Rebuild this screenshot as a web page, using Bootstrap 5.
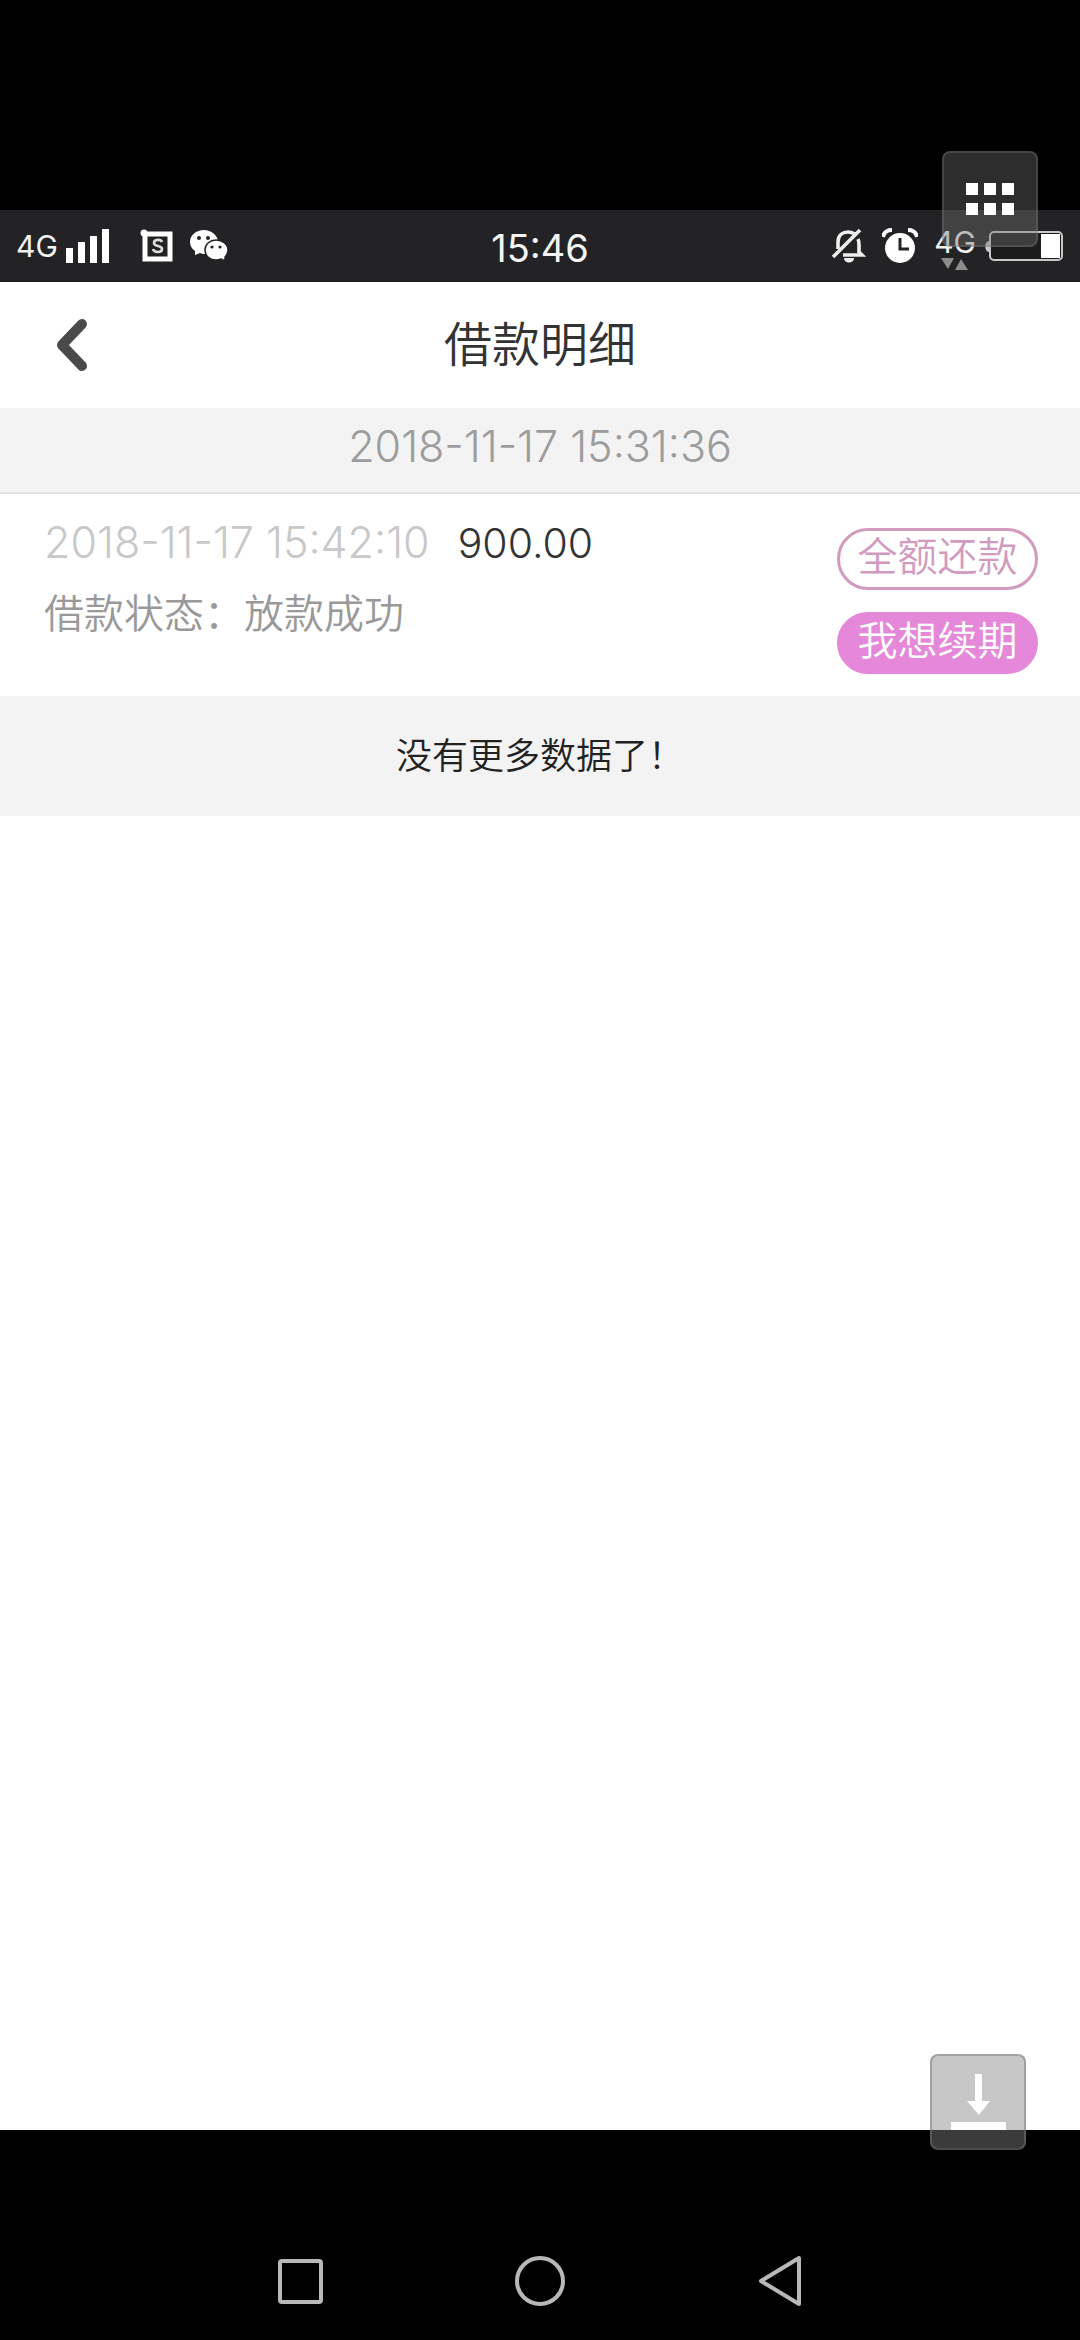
<!DOCTYPE html>
<html lang="zh-CN">
<head>
<meta charset="utf-8">
<meta name="viewport" content="width=device-width, initial-scale=1">
<title>借款明细</title>
<link href="https://cdn.jsdelivr.net/npm/bootstrap@5.3.0/dist/css/bootstrap.min.css" rel="stylesheet">
<style>
  body { background: #000; font-family: Inter, "Noto Sans CJK SC", sans-serif; font-weight: 350; color: #333; }
  svg { display: block; flex: none; }
  .top-gap { height: 210px; }
  .status-strip { height: 72px; padding: 0 16px; background: #232325; color: #f4f4f4; font-weight: 400; }
  .status-side { flex: 1 1 0; }
  .net-label { font-size: 30px; line-height: 32px; }
  .clock { font-size: 38px; line-height: 48px; padding-top: 4px; }
  .title-bar { height: 126px; padding: 0 48px; }
  .title-side { width: 48px; }
  .page-title { font-size: 48px; line-height: 64px; font-weight: 350; }
  .date-bar { height: 86px; background: #f3f3f3; border-bottom: 2px solid #e2e2e2; font-size: 43px; font-weight: 300; line-height: 76px; color: #9c9c9c; }
  .loan-row { padding: 12px 42px 22px 44px; }
  .loan-text { font-size: 40px; line-height: 72px; color: #999; }
  .loan-line { height: 72px; font-size: 43px; font-weight: 300; }
  .loan-time { color: #c8c8c8; }
  .loan-sum { color: #333; margin-left: 28px; font-size: 41px; font-weight: 350; }
  .loan-actions { padding-top: 22px; gap: 22px; }
  .pill-btn { width: 201px; height: 62px; padding: 0 0 4px; border: 3px solid #d39abf; border-radius: 31px; font-size: 40px; line-height: 48px; font-weight: 350; color: #d39abf; }
  .pill-btn.filled, .pill-btn.filled:hover { background: #e588d9; border-color: #e588d9; color: #fff; }
  .end-note { height: 120px; background: #f3f3f3; color: #222; font-size: 36px; line-height: 48px; }
  .nav-keys { height: 210px; padding-top: 124px; }
  .nav-keys .inner { width: 100%; max-width: 720px; }
  .float-btn { width: 96px; height: 96px; padding: 0; border-radius: 8px; border: 2px solid rgba(130,130,130,.3); background: rgba(112,112,112,.4); }
  .float-menu { top: 151px; right: 42px; }
  .float-save { bottom: -20px; right: 54px; background: linear-gradient(rgba(90,90,90,.34) 74px, rgba(140,140,140,.42) 74px); border-color: rgba(120,120,120,.5); overflow: hidden; }
</style>
<script src="https://cdn.jsdelivr.net/npm/bootstrap@5.3.0/dist/js/bootstrap.bundle.min.js"></script>
</head>
<body>
<div class="d-flex flex-column min-vh-100 position-relative">
  <div class="top-gap"></div>
  <div class="status-strip d-flex align-items-center">
    <div class="status-side d-flex align-items-center">
      <span class="net-label">4G</span>
      <svg class="ms-2" width="44" height="34" viewBox="0 0 44 34" fill="#fff"><path d="M0 19h7v15H0zM12 13h7v21h-7zM24 7h7v27h-7zM36 0h7v34h-7z"/></svg>
      <svg class="ms-4" width="40" height="34" viewBox="-7 0 40 34"><path d="M4 5h25v25H4z" fill="none" stroke="#fff" stroke-width="5"/><circle cx="3" cy="4" r="3.5" fill="#fff"/><path d="M21 13c-1-3-8-3-8 1 0 4 8 2 8 6 0 4-8 4-9 0" fill="none" stroke="#ddd" stroke-width="2.6"/></svg>
      <svg class="ms-3" width="38" height="32" viewBox="0 0 38 32"><path d="M14 0C6 0 0 5 0 12c0 4 2 7 5 9v4l5-2c2 1 4 1 6 1 7 0 12-5 12-12S21 0 14 0z" fill="#fff"/><circle cx="9" cy="8" r="2" fill="#232325"/><circle cx="18" cy="8" r="2" fill="#232325"/><path d="M26 10c-6 0-11 4-11 10s5 10 11 10c2 0 3 0 5-1l4 2v-4c2-2 3-4 3-7 0-6-6-10-12-10z" fill="#fff" stroke="#232325" stroke-width="1.5"/><circle cx="22" cy="17" r="1.6" fill="#232325"/><circle cx="30" cy="17" r="1.6" fill="#232325"/></svg>
    </div>
    <div class="clock">15:46</div>
    <div class="status-side d-flex align-items-center justify-content-end">
      <svg width="34" height="36" viewBox="0 0 34 36" fill="none" stroke="#eee" stroke-width="3.6"><path d="M6 21V14C6 7 11 4 16 4c3 0 5 1 7 2M26 11c1 2 1 4 1 6v7l3 3H11M1 29L28 2"/><path d="M12 30h10c0 6-10 6-10 0z" fill="#eee" stroke="none"/></svg>
      <svg class="ms-3" width="36" height="36" viewBox="0 0 36 36"><circle cx="18" cy="20" r="15" fill="#fff"/><path d="M1 9C2 4 5 2 10 2M26 2c5 0 8 2 9 7" fill="none" stroke="#fff" stroke-width="4"/><path d="M18 10v11h9" fill="none" stroke="#232325" stroke-width="3"/></svg>
      <div class="d-flex flex-column align-items-center ms-3 pt-1">
        <span class="net-label">4G</span>
        <svg width="28" height="12" viewBox="0 0 28 12" fill="#8c8c8c"><path d="M0 0h13L7 11zM14 12h13L20 1z"/></svg>
      </div>
      <svg class="ms-2" width="80" height="32" viewBox="0 0 80 32"><path d="M5 11v11c-5 0-5-11 0-11z" fill="#ccc"/><rect x="6" y="2" width="72" height="28" rx="4" fill="#1c1c1c" stroke="#c8c8c8" stroke-width="2"/><path d="M57 4h19v24H57z" fill="#fff"/></svg>
    </div>
  </div>

  <main class="flex-grow-1 bg-white position-relative">
    <header class="title-bar d-flex align-items-center justify-content-between">
      <button class="btn p-0 border-0 title-side" type="button" aria-label="返回">
        <svg width="48" height="54" viewBox="0 0 48 54"><path d="M34 6L14 27l20 21" fill="none" stroke="#4a4a4a" stroke-width="10" stroke-linecap="round" stroke-linejoin="round"/></svg>
      </button>
      <h1 class="page-title m-0">借款明细</h1>
      <span class="title-side"></span>
    </header>
    <div class="date-bar text-center">2018-11-17 15:31:36</div>
    <section class="loan-row d-flex justify-content-between">
      <div class="loan-text">
        <div class="loan-line"><span class="loan-time">2018-11-17 15:42:10</span><span class="loan-sum">900.00</span></div>
        <div>借款状态：放款成功</div>
      </div>
      <div class="loan-actions d-flex flex-column">
        <button class="btn pill-btn" type="button">全额还款</button>
        <button class="btn pill-btn filled" type="button">我想续期</button>
      </div>
    </section>
    <div class="end-note d-flex align-items-center justify-content-center">没有更多数据了！</div>
    <button class="btn float-btn float-save position-absolute" type="button" aria-label="下载">
      <svg width="92" height="92" viewBox="0 0 92 92" fill="#fff"><path d="M43 18h7v27h8L47 59 35 45h8zM19 66h55v8H19z"/></svg>
    </button>
  </main>

  <nav class="nav-keys d-flex justify-content-center">
    <div class="inner d-flex align-items-start">
      <button class="btn p-0 border-0 w-100 d-flex justify-content-center" type="button" aria-label="最近任务"><svg width="50" height="54" viewBox="0 0 50 54"><rect x="5" y="7" width="41" height="41" rx="2" fill="none" stroke="#b8b8b8" stroke-width="4"/></svg></button>
      <button class="btn p-0 border-0 w-100 d-flex justify-content-center" type="button" aria-label="主页"><svg width="50" height="54" viewBox="0 0 50 54"><circle cx="25" cy="27" r="23" fill="none" stroke="#b8b8b8" stroke-width="4"/></svg></button>
      <button class="btn p-0 border-0 w-100 d-flex justify-content-center" type="button" aria-label="返回"><svg width="50" height="54" viewBox="0 0 50 54"><path d="M44 4v46L6 27z" fill="none" stroke="#b8b8b8" stroke-width="4" stroke-linejoin="round"/></svg></button>
    </div>
  </nav>

  <button class="btn float-btn float-menu position-absolute" type="button" aria-label="菜单">
    <svg width="92" height="92" viewBox="0 0 92 92" fill="#fff"><path d="M22 30h12v12H22zM40 30h12v12H40zM58 30h12v12H58zM22 50h12v12H22zM40 50h12v12H40zM58 50h12v12H58z"/></svg>
  </button>
</div>
</body>
</html>
